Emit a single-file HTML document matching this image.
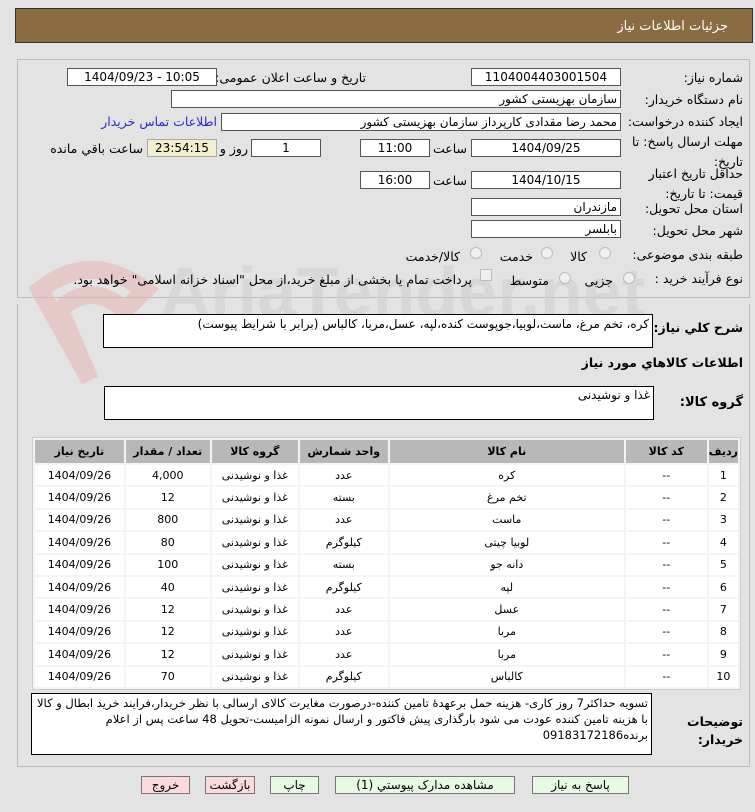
<!DOCTYPE html>
<html><head><meta charset="utf-8"><style>
*{box-sizing:border-box;margin:0;padding:0}
body{width:755px;height:812px;background:#e3e3e3;font-family:"DejaVu Sans",sans-serif;font-size:12px;color:#000;position:relative;overflow:hidden}
.a{position:absolute;white-space:nowrap}
.box{position:absolute;background:#fff;border:1px solid #555;height:18px;line-height:16px;text-align:center;font-size:12px}
.r{text-align:right;padding-right:3px}
.lab{position:absolute;white-space:nowrap;direction:rtl;text-align:right;font-size:12.5px;line-height:14px}
.rad{position:absolute;width:12px;height:12px;border-radius:50%;border:1px solid #bbb;background:#f0f0f0}
table{position:absolute;left:32px;top:437px;width:709px;border-collapse:separate;border-spacing:2px;background:#f4f4f4;border:1px solid #ccc;direction:rtl;font-size:11px}
th{background:#b8b8b8;height:23px;font-weight:bold}
td{background:#fff;height:20.4px;padding:0;text-align:center}
.btn{position:absolute;top:776px;height:18px;border:1px solid #777;text-align:center;line-height:16px;font-size:12px}
</style></head><body>
<div class="a" style="left:15px;top:8px;width:738px;height:35px;background:#8b6b42;border:1px solid #333"></div>
<div class="a" style="right:27px;top:19px;color:#fff;font-size:13px">جزئیات اطلاعات نیاز</div>
<div class="a" style="left:17px;top:59px;width:733px;height:239px;border:1px solid #bbb"></div>
<div class="a" style="left:17px;top:304px;width:733px;height:463px;border:1px solid #bbb;border-top:none"></div>
<svg class="a" style="left:20px;top:250px" width="140" height="140"><path d="M20 40 Q70 0 125 40 L105 60 Q70 30 40 60 L70 130 Z" fill="none" stroke="#e6b5b5" stroke-width="18" opacity=".6"/></svg>
<div class="a" style="left:160px;top:252px;font-size:70px;font-weight:bold;color:#d0d0d0;opacity:.6;font-family:'Liberation Sans',sans-serif">AriaTender.net</div>

<div class="lab" style="right:12px;top:71px">شماره نیاز:</div>
<div class="box" style="left:471px;top:68px;width:150px">1104004403001504</div>
<div class="lab" style="right:389px;top:71px">تاریخ و ساعت اعلان عمومی:</div>
<div class="box" style="left:67px;top:68px;width:150px">1404/09/23 - 10:05</div>
<div class="lab" style="right:12px;top:93px">نام دستگاه خریدار:</div>
<div class="box r" style="left:171px;top:90px;width:450px;direction:rtl">سازمان بهزیستی کشور</div>
<div class="lab" style="right:12px;top:115px">ایجاد کننده درخواست:</div>
<div class="box r" style="left:221px;top:113px;width:400px;direction:rtl">محمد رضا  مقدادی کارپرداز سازمان بهزیستی کشور</div>
<div class="lab" style="right:538px;top:115px;color:#2a2ad0">اطلاعات تماس خریدار</div>
<div class="lab" style="right:12px;top:132px;line-height:20px">مهلت ارسال پاسخ: تا<br>تاریخ:</div>
<div class="box" style="left:471px;top:139px;width:150px">1404/09/25</div>
<div class="lab" style="right:288px;top:142px">ساعت</div>
<div class="box" style="left:360px;top:139px;width:70px">11:00</div>
<div class="box" style="left:251px;top:139px;width:70px">1</div>
<div class="lab" style="right:507px;top:142px">روز و</div>
<div class="box" style="left:147px;top:139px;width:70px;background:#f3efcc;border-color:#aaa">23:54:15</div>
<div class="lab" style="right:612px;top:142px">ساعت باقي مانده</div>
<div class="lab" style="right:12px;top:164px;line-height:20px">حداقل تاریخ اعتبار<br>قیمت: تا تاریخ:</div>
<div class="box" style="left:471px;top:171px;width:150px">1404/10/15</div>
<div class="lab" style="right:288px;top:174px">ساعت</div>
<div class="box" style="left:360px;top:171px;width:70px">16:00</div>
<div class="lab" style="right:12px;top:202px">استان محل تحویل:</div>
<div class="box r" style="left:471px;top:198px;width:150px;direction:rtl">مازندران</div>
<div class="lab" style="right:12px;top:224px">شهر محل تحویل:</div>
<div class="box r" style="left:471px;top:220px;width:150px;direction:rtl">بابلسر</div>
<div class="lab" style="right:12px;top:248px">طبقه بندی موضوعی:</div>
<div class="rad" style="left:599px;top:247px"></div><div class="lab" style="right:168px;top:250px">کالا</div>
<div class="rad" style="left:541px;top:247px"></div><div class="lab" style="right:222px;top:250px">خدمت</div>
<div class="rad" style="left:470px;top:247px"></div><div class="lab" style="right:295px;top:250px">کالا/خدمت</div>
<div class="lab" style="right:12px;top:272px">نوع فرآیند خرید :</div>
<div class="rad" style="left:623px;top:272px"></div><div class="lab" style="right:142px;top:274px">جزیی</div>
<div class="rad" style="left:559px;top:272px"></div><div class="lab" style="right:206px;top:274px">متوسط</div>
<div class="a" style="left:480px;top:269px;width:12px;height:12px;border:1px solid #bbb;background:#f0f0f0"></div>
<div class="lab" style="right:283px;top:273px">پرداخت تمام یا بخشی از مبلغ خرید،از محل "اسناد خزانه اسلامی" خواهد بود.</div>

<div class="lab" style="right:12px;top:321px;font-weight:bold">شرح کلي نیاز:</div>
<div class="box r" style="left:103px;top:314px;width:550px;height:34px;text-align:right;direction:rtl;line-height:18px;border-color:#000">کره، تخم مرغ، ماست،لوبیا،جوپوست کنده،لپه، عسل،مربا، کالباس (برابر با شرایط پیوست)</div>
<div class="lab" style="right:12px;top:356px;font-weight:bold">اطلاعات كالاهاي مورد نياز</div>
<div class="lab" style="right:12px;top:396px;font-weight:bold;font-size:13px">گروه کالا:</div>
<div class="box r" style="left:104px;top:386px;width:550px;height:34px;text-align:right;direction:rtl;border-color:#000">غذا و نوشیدنی</div>

<table>
<tr><th style="width:28px">ردیف</th><th style="width:81px">کد کالا</th><th style="width:234px">نام کالا</th><th style="width:88px">واحد شمارش</th><th style="width:86px">گروه کالا</th><th style="width:84px">تعداد / مقدار</th><th>تاریخ نیاز</th></tr>
<tr><td>1</td><td>--</td><td>کره</td><td>عدد</td><td>غذا و نوشیدنی</td><td>4,000</td><td>1404/09/26</td></tr>
<tr><td>2</td><td>--</td><td>تخم مرغ</td><td>بسته</td><td>غذا و نوشیدنی</td><td>12</td><td>1404/09/26</td></tr>
<tr><td>3</td><td>--</td><td>ماست</td><td>عدد</td><td>غذا و نوشیدنی</td><td>800</td><td>1404/09/26</td></tr>
<tr><td>4</td><td>--</td><td>لوبیا چیتی</td><td>کیلوگرم</td><td>غذا و نوشیدنی</td><td>80</td><td>1404/09/26</td></tr>
<tr><td>5</td><td>--</td><td>دانه جو</td><td>بسته</td><td>غذا و نوشیدنی</td><td>100</td><td>1404/09/26</td></tr>
<tr><td>6</td><td>--</td><td>لپه</td><td>کیلوگرم</td><td>غذا و نوشیدنی</td><td>40</td><td>1404/09/26</td></tr>
<tr><td>7</td><td>--</td><td>عسل</td><td>عدد</td><td>غذا و نوشیدنی</td><td>12</td><td>1404/09/26</td></tr>
<tr><td>8</td><td>--</td><td>مربا</td><td>عدد</td><td>غذا و نوشیدنی</td><td>12</td><td>1404/09/26</td></tr>
<tr><td>9</td><td>--</td><td>مربا</td><td>عدد</td><td>غذا و نوشیدنی</td><td>12</td><td>1404/09/26</td></tr>
<tr><td>10</td><td>--</td><td>کالباس</td><td>کیلوگرم</td><td>غذا و نوشیدنی</td><td>70</td><td>1404/09/26</td></tr>
</table>

<div class="lab" style="right:12px;top:713px;font-weight:bold;line-height:18px">توضیحات<br>خریدار:</div>
<div class="box" style="left:31px;top:693px;width:621px;height:62px;text-align:right;direction:rtl;white-space:normal;line-height:16px;font-size:11.5px;padding:1px 3px;border-color:#000">تسویه حداکثر7 روز کاری- هزینه حمل برعهدهٔ تامین کننده-درصورت مغایرت کالای ارسالی با نظر خریدار،فرایند خرید ابطال و کالا با هزینه تامین کننده عودت می شود بارگذاری پیش فاکتور و ارسال نمونه الزامیست-تحویل 48 ساعت پس از اعلام برنده09183172186</div>

<div class="btn" style="left:532px;width:97px;background:#e6fbe2">پاسخ به نیاز</div>
<div class="btn" style="left:335px;width:180px;background:#e6fbe2">مشاهده مدارک پیوستي (1)</div>
<div class="btn" style="left:270px;width:49px;background:#e6fbe2">چاپ</div>
<div class="btn" style="left:205px;width:50px;background:#fadada">بازگشت</div>
<div class="btn" style="left:141px;width:49px;background:#fadada">خروج</div>
</body></html>
